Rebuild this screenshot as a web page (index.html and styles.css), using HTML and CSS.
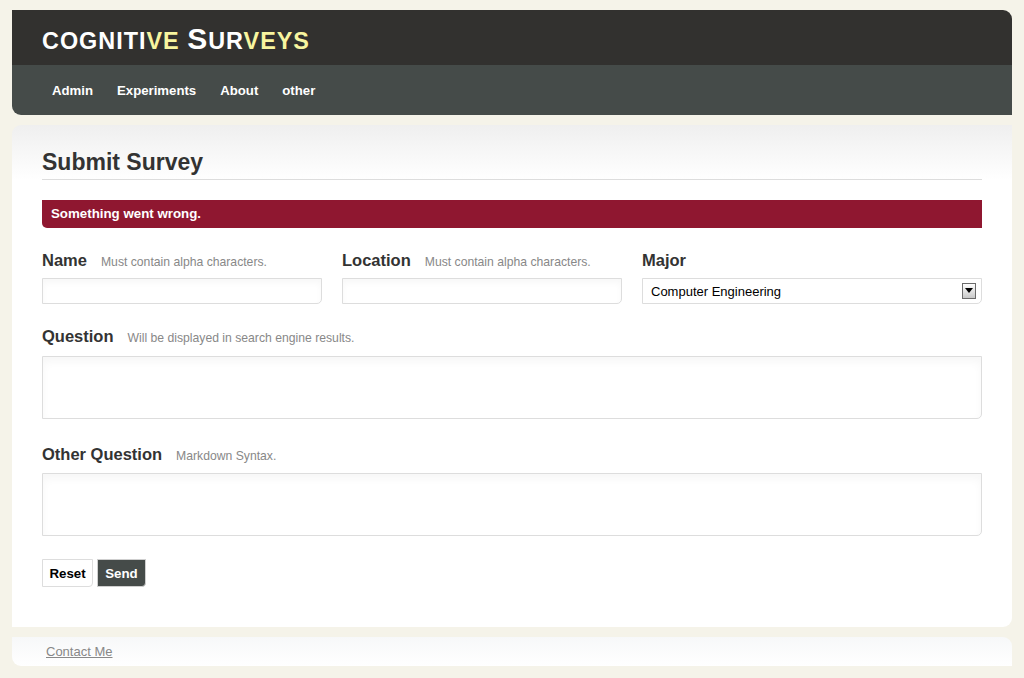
FILE: index.html
```html
<!DOCTYPE html>
<html>
<head>
<meta charset="utf-8">
<title>Cognitive Surveys</title>
<link rel="stylesheet" href="styles.css">
</head>
<body>
<div class="page">
  <header class="header">
    <div class="brand">
      <h1 class="logo">COGNITI<span class="hl">VE</span> <span class="big">S</span>UR<span class="hl">VEYS</span></h1>
    </div>
    <nav class="nav">
      <a href="#">Admin</a>
      <a href="#">Experiments</a>
      <a href="#">About</a>
      <a href="#">other</a>
    </nav>
  </header>

  <main class="panel">
    <h2 class="title">Submit Survey</h2>
    <div class="alert">Something went wrong.</div>

    <div class="row">
      <div class="field col-a">
        <div class="label-line"><span class="label">Name</span><span class="hint">Must contain alpha characters.</span></div>
        <div class="input"></div>
      </div>
      <div class="field col-a">
        <div class="label-line"><span class="label">Location</span><span class="hint">Must contain alpha characters.</span></div>
        <div class="input"></div>
      </div>
      <div class="field col-b">
        <div class="label-line"><span class="label">Major</span></div>
        <div class="input select"><span>Computer Engineering</span><span class="arrow"><svg width="8" height="5" viewBox="0 0 8 5"><path d="M0 0H8L4 5Z" fill="#000"/></svg></span></div>
      </div>
    </div>

    <div class="block q1">
      <div class="label-line"><span class="label">Question</span><span class="hint">Will be displayed in search engine results.</span></div>
      <div class="textarea"></div>
    </div>

    <div class="block q2">
      <div class="label-line"><span class="label">Other Question</span><span class="hint">Markdown Syntax.</span></div>
      <div class="textarea"></div>
    </div>

    <div class="buttons">
      <button class="btn reset">Reset</button>
      <button class="btn send">Send</button>
    </div>
  </main>

  <footer class="footer">
    <a href="#">Contact Me</a>
  </footer>
</div>
</body>
</html>
```

FILE: styles.css
```css
* { box-sizing: border-box; }
html, body { margin: 0; padding: 0; }
body {
  background: #f5f3e9;
  font-family: "Liberation Sans", Arial, sans-serif;
  color: #333;
  font-size: 13px;
}
.page {
  width: 1000px;
  margin: 0 12px;
  padding-top: 10px;
}
.header {
  border-radius: 0 9px 0 9px;
  overflow: hidden;
}
.brand {
  background: #32312f;
  height: 55px;
  padding: 0 30px;
  display: flex;
  align-items: center;
}
.logo {
  margin: 0;
  font-size: 23.4px;
  font-weight: bold;
  color: #fff;
  letter-spacing: 1px;
  line-height: 1;
  padding-top: 3px;
}
.logo .hl { color: #f8f59f; }
.logo .big { font-size: 30px; }
.nav {
  background: #454b49;
  height: 50px;
  display: flex;
  align-items: center;
  padding-left: 28px;
}
.nav a {
  color: #fff;
  text-decoration: none;
  font-weight: bold;
  font-size: 13.2px;
  padding: 0 12px;
}
.panel {
  margin-top: 10px;
  background: linear-gradient(#efefef 0px, #ffffff 55px);
  border-radius: 9px 0 9px 0;
  padding: 23px 30px 40px;
}
.title {
  margin: 0;
  font-size: 23px;
  line-height: 28px;
  font-weight: bold;
  color: #333;
  padding-bottom: 3px;
  border-bottom: 1px solid #dddddd;
}
.alert {
  margin-top: 20px;
  background: #8f1730;
  color: #fff;
  font-weight: bold;
  font-size: 13.3px;
  height: 28px;
  line-height: 28px;
  padding: 0 9px;
  border-radius: 0 0 0 5px;
}
.row {
  display: flex;
  gap: 20px;
  margin-top: 22px;
}
.col-a { width: 280px; }
.col-b { width: 340px; }
.label-line {
  height: 20px;
  line-height: 20px;
  display: flex;
  align-items: baseline;
}
.label {
  font-size: 16.5px;
  font-weight: bold;
  color: #333;
}
.hint {
  font-size: 12.2px;
  color: #888;
  margin-left: 14px;
}
.input {
  margin-top: 8px;
  height: 26px;
  border: 1px solid #dddddd;
  border-radius: 0 0 5px 0;
  background: #fff;
  box-shadow: inset 0 4px 6px rgba(0,0,0,0.03);
}
.select {
  display: flex;
  align-items: center;
  justify-content: space-between;
  padding: 0 5px 0 8px;
  color: #000;
  font-size: 13px;
  box-shadow: none;
}
.arrow {
  width: 14px;
  height: 16px;
  border: 1px solid #6b6b6b;
  background: linear-gradient(#ffffff, #c8c8c8);
  display: flex;
  align-items: center;
  justify-content: center;
}
.arrow svg { display: block; margin-top: -2px; }
.q1 { margin-top: 22px; }
.q1 .textarea { margin-top: 10px; }
.q2 { margin-top: 25px; }
.q2 .textarea { margin-top: 9px; }
.textarea {
  height: 63px;
  border: 1px solid #dddddd;
  border-radius: 0 0 5px 0;
  background: #fff;
  box-shadow: inset 0 5px 8px rgba(0,0,0,0.035);
}
.buttons {
  margin-top: 23px;
  display: flex;
  gap: 4px;
}
.btn {
  height: 28px;
  font-family: "Liberation Sans", Arial, sans-serif;
  font-size: 13.3px;
  font-weight: bold;
  padding: 0 5px;
  border: 1px solid #dddddd;
  border-radius: 0 0 4px 0;
  cursor: pointer;
}
.reset { background: #fff; color: #000; width: 51px; }
.send { background: #454b49; color: #fff; width: 49px; border-color: #cfcfcf; }
.footer {
  margin-top: 10px;
  height: 29px;
  background: linear-gradient(#f7f8f9, #ffffff);
  border-radius: 0 9px 0 9px;
  display: flex;
  align-items: center;
  padding-left: 34px;
}
.footer a {
  color: #888;
  font-size: 13px;
  text-decoration: underline;
}
```
